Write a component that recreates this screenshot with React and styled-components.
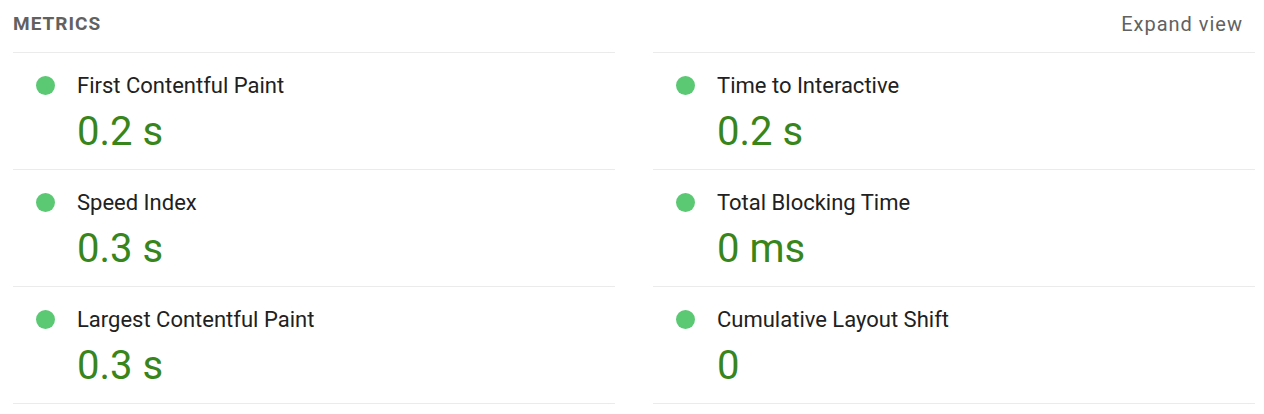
import React from "react";
import styled, { createGlobalStyle } from "styled-components";

const GlobalStyle = createGlobalStyle`
  *, *::before, *::after { box-sizing: border-box; }
  body {
    margin: 0;
    background: #fff;
    color: #212121;
    font-family: Roboto, "Liberation Sans", sans-serif;
  }
`;

const Panel = styled.section`
  padding: 3px 9px 8px 13px;
`;

const Header = styled.header`
  display: flex;
  align-items: center;
  justify-content: space-between;
  height: 41px;
  margin-bottom: 8px;
  padding-right: 12px;
`;

const Title = styled.h2`
  margin: 0;
  font-size: 19px;
  line-height: 24px;
  font-weight: 700;
  letter-spacing: 1px;
  color: #616161;
  text-transform: uppercase;
`;

const ExpandButton = styled.button`
  border: 0;
  padding: 0;
  background: none;
  color: #616161;
  font: inherit;
  font-size: 20px;
  line-height: 24px;
  letter-spacing: 1px;
  cursor: pointer;
`;

const Grid = styled.div`
  display: grid;
  grid-template-columns: 1fr 1fr;
  column-gap: 38px;
`;

const Column = styled.div`
  border-bottom: 1px solid #ebebeb;
`;

const Metric = styled.article`
  display: grid;
  grid-template-columns: 19px 1fr;
  column-gap: 22px;
  align-items: start;
  padding: 17px 0 7px 23px;
  border-top: 1px solid #ebebeb;
`;

const Dot = styled.span`
  width: 19px;
  height: 19px;
  margin-top: 6px;
  border-radius: 50%;
  background: #5bc873;
`;

const Name = styled.h3`
  margin: 0;
  font-size: 22px;
  line-height: 32px;
  font-weight: 400;
`;

const Value = styled.div`
  grid-column: 2;
  font-size: 40px;
  line-height: 60px;
  font-weight: 400;
  color: #38851b;
`;

const columns = [
  [
    ["First Contentful Paint", "0.2 s"],
    ["Speed Index", "0.3 s"],
    ["Largest Contentful Paint", "0.3 s"],
  ],
  [
    ["Time to Interactive", "0.2 s"],
    ["Total Blocking Time", "0 ms"],
    ["Cumulative Layout Shift", "0"],
  ],
];

export default function App() {
  return (
    <>
      <GlobalStyle />
      <Panel>
        <Header>
          <Title>Metrics</Title>
          <ExpandButton type="button">Expand view</ExpandButton>
        </Header>
        <Grid>
          {columns.map((metrics, index) => (
            <Column key={index}>
              {metrics.map(([name, value]) => (
                <Metric key={name}>
                  <Dot />
                  <Name>{name}</Name>
                  <Value>{value}</Value>
                </Metric>
              ))}
            </Column>
          ))}
        </Grid>
      </Panel>
    </>
  );
}
